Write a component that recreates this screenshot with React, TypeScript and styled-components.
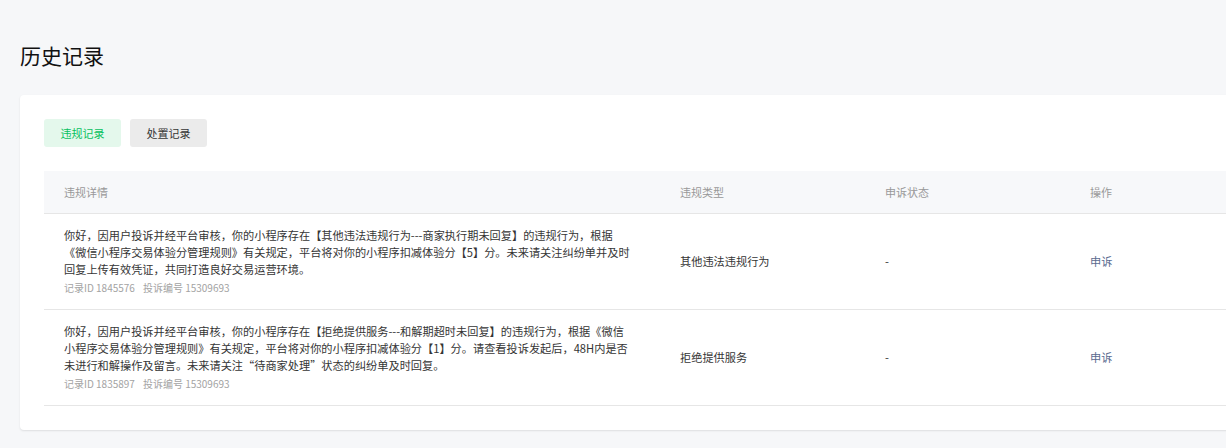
import { createGlobalStyle } from 'styled-components';
import styled from 'styled-components';
import { useState } from 'react';

const GlobalStyle = createGlobalStyle`
  html, body {
    margin: 0;
    padding: 0;
    background: #f6f7f9;
    overflow: hidden;
  }
  body {
    font-family: "Noto Sans CJK SC", "Noto Sans", sans-serif;
    color: #353535;
  }
`;

const Page = styled.div`
  padding: 40px 0 18px 20px;
  width: 1300px;
`;

const Title = styled.h1`
  margin: 0 0 25px;
  font-size: 21px;
  line-height: 30px;
  font-weight: 400;
  color: #111;
`;

const Card = styled.section`
  width: 1279px;
  box-sizing: border-box;
  background: #fff;
  border-radius: 4px;
  box-shadow: 0 1px 2px rgba(0, 0, 0, 0.1);
  padding: 24px;
`;

const Tabs = styled.div`
  display: flex;
  gap: 9px;
  margin-bottom: 24px;
`;

const Tab = styled.button<{ $active?: boolean }>`
  width: 77px;
  height: 28px;
  border: 0;
  border-radius: 3px;
  padding: 0;
  font-family: inherit;
  font-size: 11px;
  cursor: pointer;
  background: ${(p) => (p.$active ? '#e4f8ec' : '#ebebeb')};
  color: ${(p) => (p.$active ? '#07c160' : '#353535')};
`;

const Row = styled.div<{ $head?: boolean }>`
  display: grid;
  grid-template-columns: 616px 205px 205px 205px;
  align-items: center;
  border-bottom: 1px solid #e6e6e6;
  background: ${(p) => (p.$head ? '#f7f8fa' : '#fff')};
  min-height: ${(p) => (p.$head ? '42px' : '95px')};
`;

const HeadCell = styled.div`
  padding: 0 20px;
  font-size: 11px;
  color: #999;
  line-height: 42px;
`;

const Cell = styled.div<{ $link?: boolean }>`
  padding: 13px 20px;
  font-size: 11.2px;
  line-height: 17px;
  color: ${(p) => (p.$link ? '#5b6b8f' : '#353535')};
  cursor: ${(p) => (p.$link ? 'pointer' : 'default')};
`;

const Desc = styled.p`
  margin: 0;
  font-size: 11.2px;
  line-height: 17px;
  color: #353535;
`;

const DescLine = styled.span`
  display: block;
  white-space: nowrap;
`;

const Meta = styled.div`
  margin-top: 2px;
  display: flex;
  gap: 8px;
  font-size: 10px;
  line-height: 16px;
  color: #a3a3a3;
`;

const records = [
  {
    id: '1845576',
    complaint: '15309693',
    type: '其他违法违规行为',
    desc: [
      '你好，因用户投诉并经平台审核，你的小程序存在【其他违法违规行为---商家执行期未回复】的违规行为，根据',
      '《微信小程序交易体验分管理规则》有关规定，平台将对你的小程序扣减体验分【5】分。未来请关注纠纷单并及时',
      '回复上传有效凭证，共同打造良好交易运营环境。',
    ],
  },
  {
    id: '1835897',
    complaint: '15309693',
    type: '拒绝提供服务',
    desc: [
      '你好，因用户投诉并经平台审核，你的小程序存在【拒绝提供服务---和解期超时未回复】的违规行为，根据《微信',
      '小程序交易体验分管理规则》有关规定，平台将对你的小程序扣减体验分【1】分。请查看投诉发起后，48H内是否',
      '未进行和解操作及留言。未来请关注“待商家处理”状态的纠纷单及时回复。',
    ],
  },
];

export default function App() {
  const [tab, setTab] = useState(0);

  return (
    <Page>
      <GlobalStyle />
      <Title>历史记录</Title>
      <Card>
        <Tabs>
          <Tab $active={tab === 0} onClick={() => setTab(0)}>违规记录</Tab>
          <Tab $active={tab === 1} onClick={() => setTab(1)}>处置记录</Tab>
        </Tabs>

        <Row $head>
          <HeadCell>违规详情</HeadCell>
          <HeadCell>违规类型</HeadCell>
          <HeadCell>申诉状态</HeadCell>
          <HeadCell>操作</HeadCell>
        </Row>

        {records.map((r) => (
          <Row key={r.id}>
            <Cell>
              <Desc>
                {r.desc.map((line) => (
                  <DescLine key={line}>{line}</DescLine>
                ))}
              </Desc>
              <Meta>
                <span>记录ID {r.id}</span>
                <span>投诉编号 {r.complaint}</span>
              </Meta>
            </Cell>
            <Cell>{r.type}</Cell>
            <Cell>-</Cell>
            <Cell $link>申诉</Cell>
          </Row>
        ))}
      </Card>
    </Page>
  );
}
